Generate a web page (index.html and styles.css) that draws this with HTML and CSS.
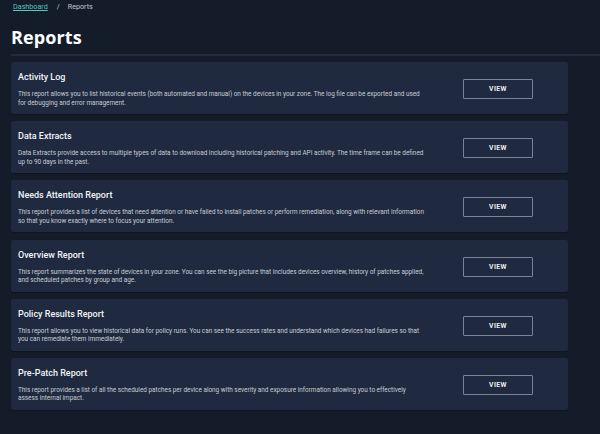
FILE: index.html
```html
<!DOCTYPE html>
<html lang="en">
<head>
<meta charset="utf-8">
<title>Reports</title>
<link rel="stylesheet" href="styles.css">
</head>
<body>
<div class="page">
  <nav class="crumbs"><a href="#" class="crumb-link">Dashboard</a><span class="sep">/</span><span class="crumb-current">Reports</span></nav>
  <h1 class="title">Reports</h1>
  <div class="rule"></div>
  <div class="list">
    <section class="card">
      <div class="card-body">
        <h2 class="card-title">Activity Log</h2>
        <p class="card-desc">This report allows you to list historical events (both automated and manual) on the devices in your zone. The log file can be exported and used for debugging and error management.</p>
      </div>
      <button class="btn">VIEW</button>
    </section>
    <section class="card">
      <div class="card-body">
        <h2 class="card-title">Data Extracts</h2>
        <p class="card-desc">Data Extracts provide access to multiple types of data to download including historical patching and API activity. The time frame can be defined up to 90 days in the past.</p>
      </div>
      <button class="btn">VIEW</button>
    </section>
    <section class="card">
      <div class="card-body">
        <h2 class="card-title">Needs Attention Report</h2>
        <p class="card-desc">This report provides a list of devices that need attention or have failed to install patches or perform remediation, along with relevant information so that you know exactly where to focus your attention.</p>
      </div>
      <button class="btn">VIEW</button>
    </section>
    <section class="card">
      <div class="card-body">
        <h2 class="card-title">Overview Report</h2>
        <p class="card-desc">This report summarizes the state of devices in your zone. You can see the big picture that includes devices overview, history of patches applied, and scheduled patches by group and age.</p>
      </div>
      <button class="btn">VIEW</button>
    </section>
    <section class="card">
      <div class="card-body">
        <h2 class="card-title">Policy Results Report</h2>
        <p class="card-desc">This report allows you to view historical data for policy runs. You can see the success rates and understand which devices had failures so that you can remediate them immediately.</p>
      </div>
      <button class="btn">VIEW</button>
    </section>
    <section class="card">
      <div class="card-body">
        <h2 class="card-title">Pre-Patch Report</h2>
        <p class="card-desc">This report provides a list of all the scheduled patches per device along with severity and exposure information allowing you to effectively<br>assess internal impact.</p>
      </div>
      <button class="btn">VIEW</button>
    </section>
  </div>
</div>
</body>
</html>
```
FILE: styles.css
```css
html, body {
  margin: 0;
  padding: 0;
  background: #141b29;
  height: 100%;
}
body {
  font-family: Roboto, "Liberation Sans", sans-serif;
  color: #e6e9ee;
}
.page {
  padding: 2px 0 0 11px;
}
.crumbs {
  display: flex;
  align-items: center;
  font-size: 7.2px;
  line-height: 10px;
  padding-left: 2px;
}
.crumb-link {
  color: #54c5bf;
  text-decoration: underline;
}
.sep {
  color: #c2c6ce;
  margin: 0 8px 0 9px;
}
.crumb-current {
  color: #c2c6ce;
}
.title {
  margin: 14px 0 0 0;
  font-family: "Open Sans", sans-serif;
  font-weight: 700;
  font-size: 18px;
  line-height: 22px;
  color: #ffffff;
  letter-spacing: 0.1px;
}
.rule {
  height: 2px;
  background: #232c3c;
  margin-top: 6px;
}
.list {
  display: flex;
  flex-direction: column;
  gap: 7.2px;
  margin-top: 6px;
  margin-right: 32px;
}
.card {
  display: flex;
  align-items: center;
  background: #1f2a40;
  border-radius: 2px;
  padding: 9px 35px 7px 7px;
  box-shadow: 0 1px 1px rgba(0,0,0,0.25);
}
.card-body {
  flex: 1;
}
.card-title {
  margin: 0;
  font-size: 9px;
  line-height: 12px;
  font-weight: 500;
  color: #f2f4f7;
}
.card-desc {
  margin: 7px 0 0 0;
  font-size: 6.4px;
  line-height: 8.5px;
  color: #c7ccd5;
  max-width: 410px;
}
.btn {
  width: 70px;
  height: 20px;
  background: transparent;
  border: 1px solid #7b8494;
  border-radius: 1px;
  color: #e8ebf0;
  font-family: Roboto, sans-serif;
  font-weight: 700;
  font-size: 6.8px;
  letter-spacing: 0.4px;
  margin-top: 0;
  padding: 0;
}
```
